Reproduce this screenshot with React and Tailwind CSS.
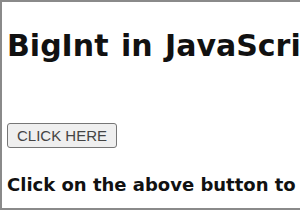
import React from 'react';

export default function App() {
  return (
    <div className="w-[300px] h-[210px] overflow-hidden bg-white border-l-2 border-t-2 border-b-2 border-[#8a8a8a] box-border">
      <div className="pl-[5px] pt-[26px] whitespace-nowrap">
        <h1 className="text-[30px] leading-[36px] font-bold text-[#111] [word-spacing:2px] font-['DejaVu_Sans',sans-serif]">
          BigInt in JavaScript
        </h1>
        <button className="mt-[59px] h-[25px] px-[9px] bg-[#efefef] border border-[#767676] rounded-[3px] text-[15px] text-[#444] font-['Liberation_Sans',Arial,sans-serif] leading-none">
          CLICK HERE
        </button>
        <p className="mt-[24px] text-[18px] leading-[26px] font-bold text-[#111] font-['DejaVu_Sans',sans-serif]">
          Click on the above button to see the result
        </p>
      </div>
    </div>
  );
}
